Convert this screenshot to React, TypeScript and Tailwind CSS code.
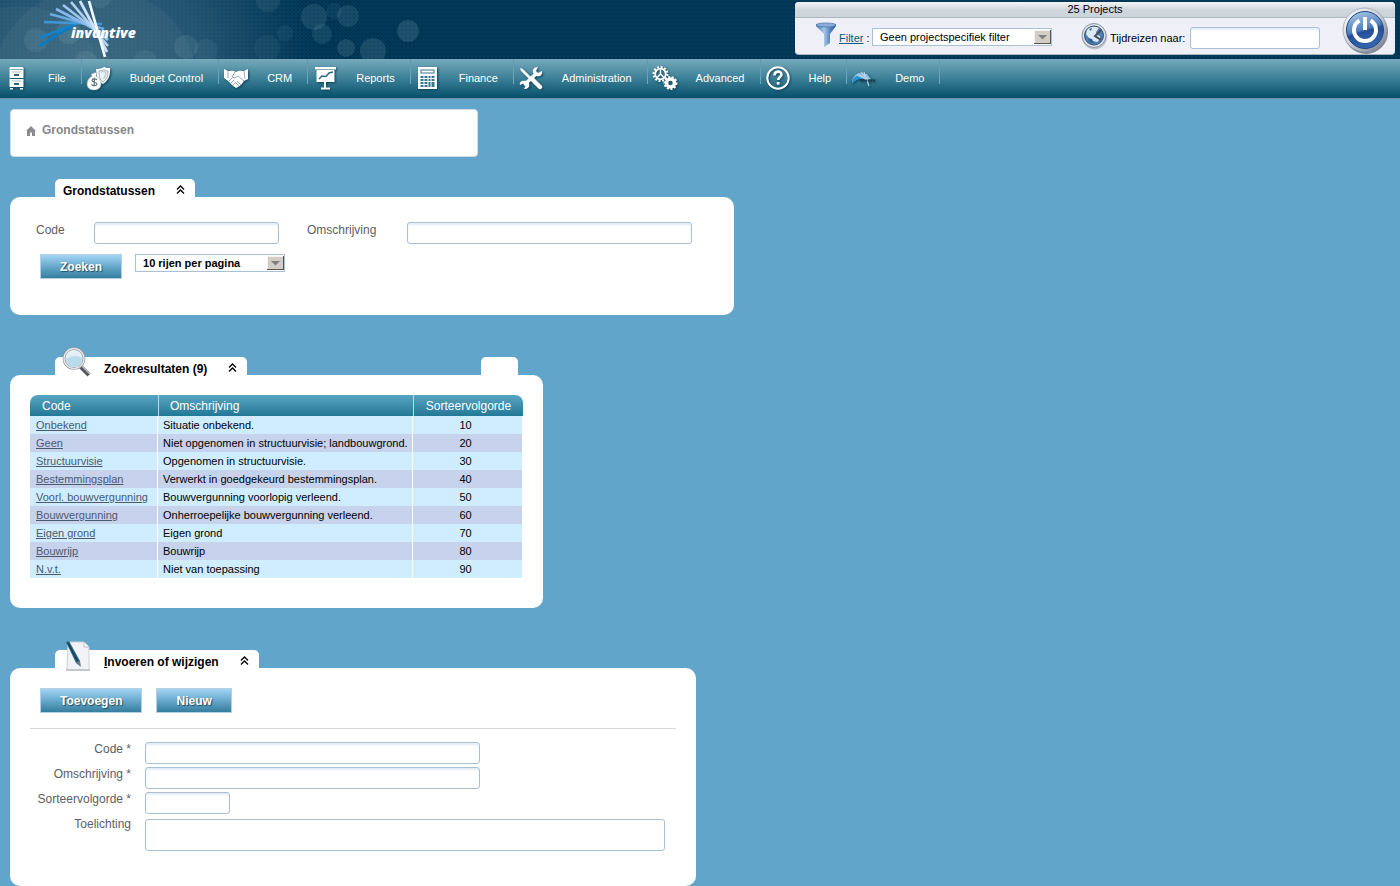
import React from "react";

const results = [
  { code: "Onbekend", description: "Situatie onbekend.", order: 10 },
  { code: "Geen", description: "Niet opgenomen in structuurvisie; landbouwgrond.", order: 20 },
  { code: "Structuurvisie", description: "Opgenomen in structuurvisie.", order: 30 },
  { code: "Bestemmingsplan", description: "Verwerkt in goedgekeurd bestemmingsplan.", order: 40 },
  { code: "Voorl. bouwvergunning", description: "Bouwvergunning voorlopig verleend.", order: 50 },
  { code: "Bouwvergunning", description: "Onherroepelijke bouwvergunning verleend.", order: 60 },
  { code: "Eigen grond", description: "Eigen grond", order: 70 },
  { code: "Bouwrijp", description: "Bouwrijp", order: 80 },
  { code: "N.v.t.", description: "Niet van toepassing", order: 90 },
];

const bubbles = [
  [36, 40, 12, 0.12], [69, 32, 12, 0.14], [100, -4, 12, 0.12], [86, 62, 11, 0.12],
  [145, 62, 12, 0.1], [186, 47, 12, 0.12], [206, 51, 12, 0.08], [268, 0, 12, 0.1],
  [267, 48, 13, 0.06], [285, 33, 8, 0.07], [314, 17, 13, 0.14], [334, 11, 8, 0.08],
  [348, 16, 11, 0.14], [322, 34, 10, 0.12], [346, 48, 9, 0.16], [373, 51, 13, 0.16],
  [408, 31, 11, 0.18],
];

const rays = [
  { x1: 39, y1: 46, x2: 72, y2: 26, color: "#0a7cc6" },
  { x1: 39, y1: 38, x2: 78, y2: 23, color: "#1481ca" },
  { x1: 44, y1: 22, x2: 102, y2: 24, color: "#3f97d8" },
  { x1: 50, y1: 14, x2: 104, y2: 29, color: "#6aaae2" },
  { x1: 56, y1: 9, x2: 106, y2: 35, color: "#86b7ea" },
  { x1: 63, y1: 5, x2: 108, y2: 40, color: "#9cc3f0" },
  { x1: 71, y1: 2, x2: 108, y2: 46, color: "#b4d0f5" },
  { x1: 80, y1: 1, x2: 107, y2: 52, color: "#cfe0fa" },
  { x1: 89, y1: 1, x2: 105, y2: 57, color: "#f4f8ff" },
];

const HeaderArt = () => (
  <svg className="absolute left-0 top-0" width="480" height="59" viewBox="0 0 480 59" aria-hidden="true">
    <defs>
      <radialGradient id="glow" gradientUnits="userSpaceOnUse" cx="95" cy="70" r="220">
        <stop offset="0" stopColor="#7fa3b4" stopOpacity="0.42" />
        <stop offset="0.5" stopColor="#7fa3b4" stopOpacity="0.28" />
        <stop offset="1" stopColor="#7fa3b4" stopOpacity="0" />
      </radialGradient>
    </defs>
    <rect width="480" height="59" fill="url(#glow)" />
    <circle cx="95" cy="90" r="104" fill="#fff" opacity="0.04" />
    <circle cx="20" cy="90" r="84" fill="#fff" opacity="0.03" />
    {bubbles.map(([cx, cy, r, opacity]) => (
      <circle key={`${cx}-${cy}`} cx={cx} cy={cy} r={r} fill="#9fc4cf" opacity={opacity} />
    ))}
  </svg>
);

const Logo = () => (
  <svg className="relative" width="150" height="59" viewBox="0 0 150 59" role="img" aria-label="invantive">
    {rays.map((ray) => (
      <line key={ray.color} x1={ray.x1} y1={ray.y1} x2={ray.x2} y2={ray.y2} stroke={ray.color} strokeWidth="2.700" />
    ))}
    <text x="71" y="38" fill="#fff" fontFamily="Open Sans, sans-serif" fontSize="14" fontWeight="800" fontStyle="italic">
      invantive
    </text>
  </svg>
);

const FileIcon = () => (
  <svg width="26" height="26" viewBox="0 0 26 26" aria-hidden="true">
    <path d="M6 2h13l1 2.500H5z" fill="#fff" />
    <path d="M5.500 5h14v8h-14zM5.500 14h14v8h-14z" fill="#fff" />
    <path d="M6 23h3v1.500H6zM16 23h3v1.500h-3z" fill="#fff" />
    <path d="M7.500 7h10M7.500 16h10" stroke="#a9bfc8" />
    <path d="M10 9h5v2h-5zM10 18h5v2h-5z" fill="#2f6378" />
  </svg>
);

const BudgetIcon = () => (
  <svg width="26" height="26" viewBox="0 0 26 26" aria-hidden="true">
    <path d="M10 4c3 0 6-.5 8-2 2 1 4 1 6 1 .5 7-1 12-7 16-4-2-7-6-7-15z" fill="#fff" />
    <path d="M13 6c2 0 4-.5 5-1.500C19 5.500 20.500 6 22 6c0 5-1 8-5 11-3-2-4-5-4-11z" fill="#edf1f3" stroke="#8aa0aa" strokeWidth="0.8" />
    <path d="M15 7l3-1 2 2-2 6" fill="none" stroke="#c5d0d5" strokeWidth="1.500" />
    <path d="M5 9l6-2-1 4c4 2 5 5 5 8 0 4-3 6-7 6s-7-2-7-6c0-4 2-6 5-8z" fill="#fff" stroke="#8aa0aa" strokeWidth="0.6" />
    <path d="M11 15c-1-1.500-5-1.500-5 .5s5 1.500 5 3.500-4 2-5.500.5M8.300 12.500v9" fill="none" stroke="#60757f" strokeWidth="1.200" />
  </svg>
);

const CrmIcon = () => (
  <svg width="26" height="26" viewBox="0 0 26 26" aria-hidden="true">
    <path d="M1 4l4 2c3 0 5-1 8 1 3-2 5-1 8-1l4-2v10l-4 2-3 4-3 2-2 1-4-3-4-4-4-3z" fill="#fff" />
    <path d="M12 7l-3 5 3 1 3-2 6 5M6 16l3-3M8 18l3-3M10 20l3-3M14 16l4 4M13 18l3 3M5 6v7M21 6l1 8" fill="none" stroke="#7d96a1" strokeWidth="0.800" />
  </svg>
);

const ReportsIcon = () => (
  <svg width="26" height="26" viewBox="0 0 26 26" aria-hidden="true">
    <path d="M3 2h21v2.500H3zM4.500 5h18v12h-18z" fill="#fff" />
    <path d="M7 14l3-3 4 .5 3-3.500 4-1" fill="none" stroke="#2b6c85" strokeWidth="1.500" />
    <path d="M13 17v6M9 23.500h9" stroke="#fff" strokeWidth="2" />
  </svg>
);

const FinanceIcon = () => (
  <svg width="26" height="26" viewBox="0 0 26 26" aria-hidden="true">
    <rect x="3" y="2" width="19" height="22" fill="#fff" />
    <rect x="5.500" y="4.500" width="14" height="4" fill="#39768c" />
    <rect x="6.500" y="5.500" width="12" height="2" fill="#fff" />
    <path d="M5.500 11h3v2h-3zM9.500 11h3v2h-3zM13.500 11h2v2h-2zM16.500 11h3v2h-3zM5.500 14h3v2h-3zM9.500 14h3v2h-3zM13.500 14h2v2h-2zM16.500 14h3v2h-3zM5.500 17h3v2h-3zM9.500 17h3v2h-3zM13.500 17h2v5h-2zM16.500 17h3v5h-3zM5.500 20h3v2h-3zM9.500 20h3v2h-3z" fill="#39768c" />
  </svg>
);

const AdminIcon = () => (
  <svg width="26" height="26" viewBox="0 0 26 26" aria-hidden="true">
    <path d="M2 3l3 1 8 8-2 2-8-8z" fill="#fff" />
    <path d="M14 14l8 8" stroke="#fff" strokeWidth="4.500" strokeLinecap="round" />
    <path d="M6 20L19 8" stroke="#fff" strokeWidth="3.500" />
    <path d="M20 2c-4 0-6 3-5 6l3 3c4 1 7-1 6-5l-4 2-2-2z" fill="#fff" />
    <path d="M9 16c-4-1-8 0-7 4l4-2 2 2-2 4c4 0 6-2 5-6z" fill="#fff" />
  </svg>
);

const AdvancedIcon = () => (
  <svg width="26" height="26" viewBox="0 0 26 26" fill="none" stroke="#fff" aria-hidden="true">
    <circle cx="8.500" cy="9" r="5.300" strokeWidth="1.800" />
    <circle cx="8.500" cy="9" r="7" strokeWidth="2" strokeDasharray="2 1.660" />
    <path d="M8.500 9V4M8.500 9l-4 4M8.500 9l4 4" strokeWidth="1.500" />
    <circle cx="18.500" cy="18" r="4" strokeWidth="3.500" />
    <circle cx="18.500" cy="18" r="6" strokeWidth="2" strokeDasharray="2 1.600" />
  </svg>
);

const HelpIcon = () => (
  <svg width="26" height="26" viewBox="0 0 26 26" fill="none" stroke="#fff" aria-hidden="true">
    <circle cx="13" cy="13" r="10.700" strokeWidth="2" />
    <path d="M9.500 10.500c0-5 7-5 7-1 0 2.500-3.300 2.700-3.300 5.500" strokeWidth="2.600" />
    <path d="M13.200 17v2.600" strokeWidth="2.800" />
  </svg>
);

const DemoIcon = () => (
  <svg width="26" height="26" viewBox="0 0 26 26" aria-hidden="true">
    <path d="M1 18c0-4 2-8 7-10l8 1 4 5-4 1c-6-3-10-1-15 3z" fill="#8cc0df" />
    <path d="M1 18c0-3 2-6 5-7l7 3c-5-1-8 1-12 4z" fill="#2391d4" />
    <path d="M7 9l10 7M10 7l8 9M13 7l5 14" stroke="#b4d2e4" strokeWidth="1.300" />
    <path d="M9 15.500h15" stroke="#183f50" strokeWidth="2" strokeDasharray="2 0.600" />
  </svg>
);

const menu = [
  { label: "File", icon: <FileIcon /> },
  { label: "Budget Control", icon: <BudgetIcon /> },
  { label: "CRM", icon: <CrmIcon /> },
  { label: "Reports", icon: <ReportsIcon /> },
  { label: "Finance", icon: <FinanceIcon /> },
  { label: "Administration", icon: <AdminIcon /> },
  { label: "Advanced", icon: <AdvancedIcon /> },
  { label: "Help", icon: <HelpIcon /> },
  { label: "Demo", icon: <DemoIcon /> },
];

const FunnelIcon = () => (
  <svg width="24" height="26" viewBox="0 0 24 26" aria-hidden="true">
    <defs>
      <linearGradient id="funnel" x1="0" x2="1">
        <stop offset="0" stopColor="#3e73b0" />
        <stop offset="0.4" stopColor="#a9c8e8" />
        <stop offset="0.7" stopColor="#5585bd" />
        <stop offset="1" stopColor="#2d5c9a" />
      </linearGradient>
    </defs>
    <path d="M1 2h20v2l-6 8v9l-6 4V12L1 4z" fill="url(#funnel)" />
    <ellipse cx="11" cy="3" rx="10" ry="2" fill="#8aaedb" stroke="#47719f" strokeWidth="0.7" />
  </svg>
);

const GlobeIcon = () => (
  <svg width="28" height="28" viewBox="0 0 28 28" aria-hidden="true">
    <circle cx="14.500" cy="15" r="12.500" fill="#8b93a0" opacity="0.5" />
    <circle cx="14" cy="13.500" r="12" fill="#dde3ea" stroke="#8d95a2" />
    <circle cx="14" cy="13.500" r="9.500" fill="#4f7fb3" stroke="#34506f" />
    <path d="M7 8c3-4 8-4 12-2l-3 4 1 3 3 1c0 3-1 5-3 6l-4-1-4-3-3-4z" fill="#dce9f3" />
    <path d="M8 16l4 1 2 4c-3 1-6-2-6-5zM9 7l3-1-1 3z" fill="#33659c" />
    <path d="M21 8l-6 6 6 4" fill="none" stroke="#4b5058" strokeWidth="2" />
  </svg>
);

const PowerIcon = () => (
  <svg width="50" height="50" viewBox="0 0 50 50" aria-hidden="true">
    <defs>
      <linearGradient id="powerRing" x1="0" y1="0" x2="1" y2="1">
        <stop offset="0" stopColor="#fff" />
        <stop offset="0.5" stopColor="#c9ced8" />
        <stop offset="1" stopColor="#6b7283" />
      </linearGradient>
      <linearGradient id="powerFace" x1="0.3" y1="0" x2="0.6" y2="1">
        <stop offset="0" stopColor="#a5c6e6" />
        <stop offset="0.48" stopColor="#4f80bd" />
        <stop offset="0.55" stopColor="#24509a" />
        <stop offset="1" stopColor="#3568b4" />
      </linearGradient>
    </defs>
    <circle cx="26" cy="26" r="22" fill="#3c4250" opacity="0.6" />
    <circle cx="25" cy="24" r="22" fill="url(#powerRing)" stroke="#8b93a3" strokeWidth="0.6" />
    <circle cx="25" cy="24" r="18.500" fill="url(#powerFace)" stroke="#23467f" />
    <path d="M19.500 14.500a11 11 0 1 0 11 0" fill="none" stroke="#fff" strokeWidth="4" />
    <path d="M25 11V24" stroke="#fff" strokeWidth="4" />
  </svg>
);

const MagnifierIcon = () => (
  <svg width="32" height="34" viewBox="0 0 32 34" aria-hidden="true">
    <path d="M19 20l8 8" stroke="#55595e" strokeWidth="4.500" />
    <path d="M20 19l8 8" stroke="#b9bdc1" strokeWidth="1.500" />
    <circle cx="12" cy="11.500" r="10" fill="#e3eff6" stroke="#8b8f93" strokeWidth="2.600" />
    <circle cx="12" cy="11.500" r="10" fill="none" stroke="#e4e7e9" strokeWidth="1.400" />
    <path d="M3.500 12c4-3 12-4 17-1-1 5-4 9-8.500 9s-8-4-8.500-8z" fill="#b9dbeb" />
  </svg>
);

const NoteIcon = () => (
  <svg width="32" height="32" viewBox="-3 -1 32 32" aria-hidden="true">
    <path d="M3 1h16l5 5v23H2z" fill="#f1f3f6" stroke="#cdd2d8" />
    <path d="M19 1v5h5" fill="#fff" stroke="#b9c0c7" />
    <path d="M1 28h24v2H1z" fill="#c3c8cd" />
    <path d="M1 1l3-1 11 20v5l-4-3z" fill="#2a6684" />
    <path d="M3 2l10 19" stroke="#183f56" strokeWidth="1.500" />
    <path d="M11 21l4-1 1 6z" fill="#6d7b85" />
  </svg>
);

const CollapseButton = () => (
  <button type="button" aria-label="Inklappen" className="h-[14px] w-[9px]">
    <svg width="9" height="10" viewBox="0 0 9 10" fill="none" stroke="#000" strokeWidth="1.300" aria-hidden="true">
      <path d="M1 4.500L4.500 1 8 4.500M1 8.500L4.500 5 8 8.500" />
    </svg>
  </button>
);

type PanelProps = {
  title: React.ReactNode;
  icon?: React.ReactNode;
  extraTab?: boolean;
  className: string;
  children: React.ReactNode;
};

const Panel = ({ title, icon, extraTab, className, children }: PanelProps) => (
  <section className="flex w-fit max-w-full flex-col">
    <div className="flex justify-between pl-[45px] pr-[25px]">
      <div
        className={
          "relative flex h-[18px] gap-[21px] rounded-t-[5px] bg-white pr-[10px] pt-1 " + (icon ? "pl-[49px]" : "pl-2")
        }
      >
        {icon && <span className="absolute -top-[10px] left-[7px]">{icon}</span>}
        <h2 className="whitespace-nowrap text-[12px] font-bold leading-4 text-black">{title}</h2>
        <CollapseButton />
      </div>
      {extraTab && <div className="h-[18px] w-[37px] rounded-t-[5px] bg-white" />}
    </div>
    <div className={"max-w-full rounded-[10px] bg-white " + className}>{children}</div>
  </section>
);

const field =
  "block h-[22px] rounded-[3px] border border-[#a9c0d3] bg-white px-1 text-[11px] shadow-[inset_0_2px_2px_#e6edf6] outline-none";

const ActionButton = ({ children }: { children: React.ReactNode }) => (
  <button
    type="button"
    className="h-[25px] border border-[#b5d0e0] bg-linear-to-b from-[#a3d5f5] via-[#68a9cb] to-[#357e9f] px-[19px] text-[12px] font-bold leading-4 text-white [text-shadow:1px_1px_1px_#274a5e]"
  >
    {children}
  </button>
);

type PickerProps = { id: string; label: string; option: string; className: string };

const Picker = ({ id, label, option, className }: PickerProps) => (
  <div className="relative">
    <select
      id={id}
      aria-label={label}
      className={"block h-[18px] appearance-none border border-[#a9c0d6] bg-white pl-[7px] text-[11px] text-black " + className}
    >
      <option>{option}</option>
    </select>
    <svg className="pointer-events-none absolute right-px top-[2px]" width="17" height="14" viewBox="0 0 17 14" aria-hidden="true">
      <rect width="17" height="14" fill="#555" />
      <rect width="16" height="13" fill="#f5f3ef" />
      <rect x="1" y="1" width="15" height="12" fill="#d2cec6" />
      <path d="M4 5h9L8.500 9.500z" fill="#808080" />
    </svg>
  </div>
);

const Header = () => (
  <header className="relative flex h-[59px] justify-between bg-[#00395a] bg-[radial-gradient(circle,#002f4b_1px,transparent_1px)] bg-[size:4px_4px]">
    <HeaderArt />
    <Logo />
    <div className="relative mr-[5px] mt-[2px] h-[53px] w-[600px] rounded-[4px] border-b border-[#aab4bf] bg-[#eeeff7]">
      <div className="h-4 rounded-t-[4px] border-b border-[#aeb7bf] bg-linear-to-b from-[#f3f5f6] via-[#d0d7dc] to-[#cbd4da] text-center text-[11px] leading-[15px] text-black">
        25 Projects
      </div>
      <div className="flex items-start pl-5 pt-1 text-[11px] leading-4 text-black">
        <FunnelIcon />
        <span className="w-[33px] whitespace-nowrap pt-2">
          <a href="#filter" className="text-[#0b5c78] underline">
            Filter
          </a>{" "}
          :
        </span>
        <div className="pt-[6px]">
          <Picker id="project-filter" label="Filter" option="Geen projectspecifiek filter" className="w-[180px]" />
        </div>
        <span className="ml-7">
          <GlobeIcon />
        </span>
        <label htmlFor="time-travel" className="ml-[2px] w-20 pt-2">
          Tijdreizen naar:
        </label>
        <div className="pt-[5px]">
          <input id="time-travel" type="text" className={field + " w-[130px]"} />
        </div>
      </div>
      <button type="button" aria-label="Afmelden" className="absolute right-[5px] top-[4px]">
        <PowerIcon />
      </button>
    </div>
  </header>
);

const Navigation = () => (
  <nav className="border-b border-[#6f8f9d] bg-linear-to-b from-[#76a9bc] via-[#3b8097] to-[#00506b]">
    <ul className="flex h-[39px]">
      {menu.map((item) => (
        <li key={item.label} className="flex">
          <a href="#menu" className="flex h-[38px] items-center gap-[18px] pl-1 pr-[15px] text-[11px] text-white">
            <span className="w-[26px] drop-shadow-[1px_1px_1px_#0d4258]">{item.icon}</span>
            {item.label}
          </a>
          <span className="h-[25px] w-px bg-linear-to-b from-[#5d97ae] to-[#6fabc0]" />
        </li>
      ))}
    </ul>
  </nav>
);

const SearchPanel = () => (
  <Panel title="Grondstatussen" className="h-[118px] w-[724px] px-[26px] pt-[25px]">
    <form>
      <div className="flex text-[12px] leading-4 text-[#5c6065]">
        <label htmlFor="search-code" className="w-[58px]">
          Code
        </label>
        <input id="search-code" type="text" className={field + " w-[185px]"} />
        <label htmlFor="search-description" className="ml-7 w-[100px]">
          Omschrijving
        </label>
        <input id="search-description" type="text" className={field + " w-[285px]"} />
      </div>
      <div className="mt-[10px] flex items-start gap-[13px] pl-1">
        <ActionButton>Zoeken</ActionButton>
        <Picker id="page-size" label="Rijen per pagina" option="10 rijen per pagina" className="w-[150px] font-bold" />
      </div>
    </form>
  </Panel>
);

const ResultsPanel = () => (
  <Panel title="Zoekresultaten (9)" icon={<MagnifierIcon />} extraTab className="w-[533px] px-5 pb-[30px] pt-5">
    <table className="w-[493px] table-fixed border-separate border-spacing-0 text-left text-[11px] text-black">
      <thead>
        <tr className="h-[21px] text-[12px] leading-4 text-white [&>th]:bg-linear-to-b [&>th]:from-[#58a5c1] [&>th]:to-[#227897] [&>th]:p-0 [&>th]:font-normal">
          <th className="w-32 rounded-tl-[8px]">
            <span className="pl-3">Code</span>
          </th>
          <th className="w-[255px] border-l border-[#b5dbe8]">
            <span className="pl-[11px]">Omschrijving</span>
          </th>
          <th className="rounded-tr-[8px] border-l border-[#b5dbe8] text-center">Sorteervolgorde</th>
        </tr>
      </thead>
      <tbody>
        {results.map((row) => (
          <tr key={row.code} className="h-[18px] leading-[18px] odd:bg-[#d0ecff] even:bg-[#c7d2ec]">
            <td className="border-r border-white p-0 pl-[6px]">
              <a href="#status" className="text-[#4b596f] underline">
                {row.code}
              </a>
            </td>
            <td className="whitespace-nowrap border-r border-white p-0 pl-[5px]">{row.description}</td>
            <td className="border-r border-white p-0 pr-1 text-center">{row.order}</td>
          </tr>
        ))}
      </tbody>
    </table>
  </Panel>
);

const EditPanel = () => (
  <Panel
    title={
      <>
        <span className="underline">I</span>nvoeren of wijzigen
      </>
    }
    icon={<NoteIcon />}
    className="w-[686px] px-5 pb-[35px] pt-5"
  >
    <form>
      <div className="flex gap-[14px] pl-[10px]">
        <ActionButton>Toevoegen</ActionButton>
        <ActionButton>Nieuw</ActionButton>
      </div>
      <hr className="mb-[13px] mt-[15px] border-[#d8d8d8]" />
      <div className="grid grid-cols-[101px_1fr] gap-x-[14px] gap-y-[3px] text-[12px] leading-[14px] text-[#5c6065]">
        <label htmlFor="edit-code" className="text-right">
          Code *
        </label>
        <input id="edit-code" type="text" className={field + " w-[335px]"} />
        <label htmlFor="edit-description" className="text-right">
          Omschrijving *
        </label>
        <input id="edit-description" type="text" className={field + " w-[335px]"} />
        <label htmlFor="edit-order" className="text-right">
          Sorteervolgorde *
        </label>
        <input id="edit-order" type="text" className={field + " w-[85px]"} />
        <label htmlFor="edit-notes" className="text-right">
          Toelichting
        </label>
        <textarea
          id="edit-notes"
          className="mt-[2px] block h-8 w-[520px] resize-none rounded-[3px] border border-[#a9c0d3] bg-white px-1 text-[11px] outline-none"
        />
      </div>
    </form>
  </Panel>
);

const App = () => {
  return (
    <div className="min-h-screen bg-[#61a6ca] font-['Liberation_Sans',Arial,sans-serif]">
      <Header />
      <Navigation />
      <main className="flex flex-col gap-[42px] px-[10px] pt-[10px]">
        <div className="flex flex-col gap-[22px]">
          <div className="flex h-12 w-[468px] max-w-full items-start gap-[6px] rounded-[4px] border border-[#d5dde3] bg-white px-[15px] pt-3">
            <svg className="mt-1" width="10" height="10" viewBox="0 0 10 10" fill="#8b8c90" aria-hidden="true">
              <path d="M5 0l5 5H9v5H6V6.500H4V10H1V5H0z" />
            </svg>
            <h1 className="text-[12px] font-bold leading-4 text-[#86878a]">Grondstatussen</h1>
          </div>
          <SearchPanel />
        </div>
        <ResultsPanel />
        <EditPanel />
      </main>
    </div>
  );
};

export default App;
